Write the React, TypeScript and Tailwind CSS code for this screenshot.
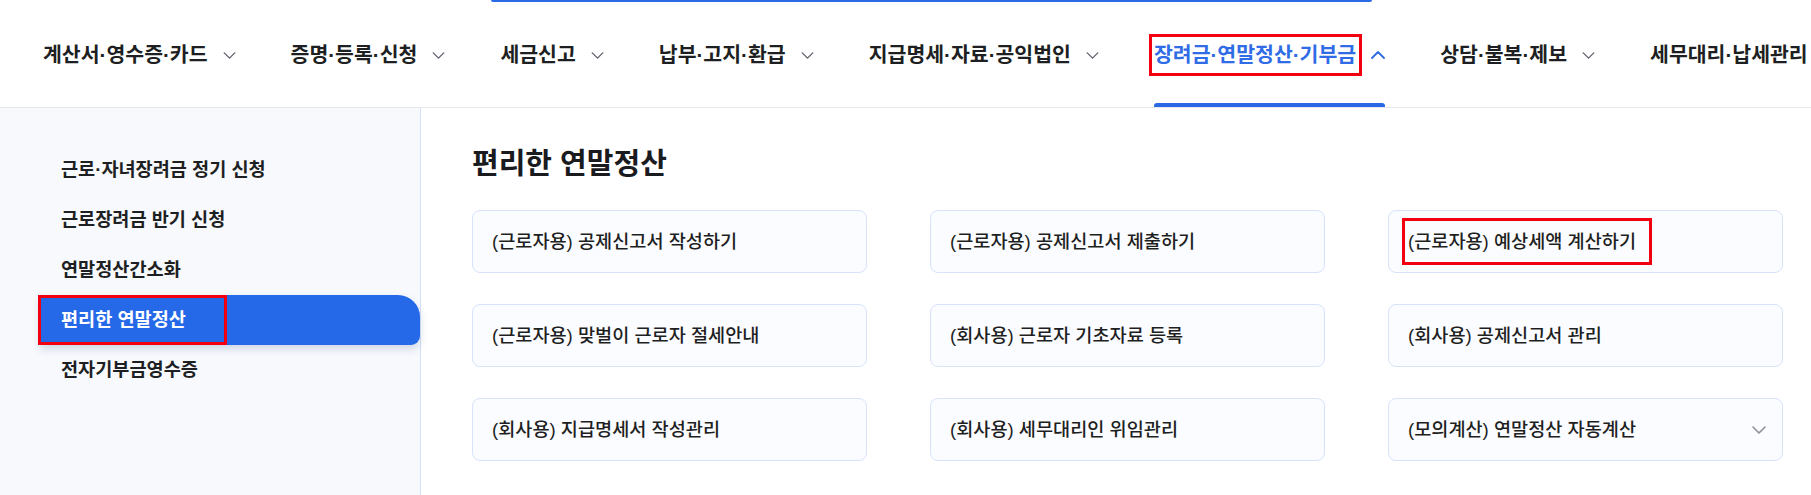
import React from "react";

const navItems = [
  "계산서·영수증·카드",
  "증명·등록·신청",
  "세금신고",
  "납부·고지·환급",
  "지급명세·자료·공익법인",
  "장려금·연말정산·기부금",
  "상담·불복·제보",
  "세무대리·납세관리",
];

const sideItems = [
  "근로·자녀장려금 정기 신청",
  "근로장려금 반기 신청",
  "연말정산간소화",
  "편리한 연말정산",
  "전자기부금영수증",
];

const cards = [
  "(근로자용) 공제신고서 작성하기",
  "(근로자용) 공제신고서 제출하기",
  "(근로자용) 예상세액 계산하기",
  "(근로자용) 맞벌이 근로자 절세안내",
  "(회사용) 근로자 기초자료 등록",
  "(회사용) 공제신고서 관리",
  "(회사용) 지급명세서 작성관리",
  "(회사용) 세무대리인 위임관리",
  "(모의계산) 연말정산 자동계산",
];

function ChevronDown({ className }: { className?: string }) {
  return (
    <svg viewBox="0 0 14 8" className={className} fill="none">
      <path d="M1 1l6 6 6-6" stroke="currentColor" strokeWidth="1.6" strokeLinecap="round" strokeLinejoin="round" />
    </svg>
  );
}

function ChevronUp({ className }: { className?: string }) {
  return (
    <svg viewBox="0 0 14 8" className={className} fill="none">
      <path d="M1 7l6-6 6 6" stroke="currentColor" strokeWidth="1.8" strokeLinecap="round" strokeLinejoin="round" />
    </svg>
  );
}

export default function App() {
  return (
    <div className="w-[1811px] h-[495px] overflow-hidden bg-white font-['Liberation_Sans','Noto_Sans_CJK_KR',sans-serif] text-[#1e1f22]">
      {/* search box bottom edge */}
      <div className="h-[2px] flex">
        <div className="ml-[491px] w-[881px] h-[2px] bg-[#2b6ae6] rounded-b-full" />
      </div>

      {/* top nav */}
      <nav className="h-[106px] border-b border-[#e6e8ec] flex items-stretch pl-[43px] gap-[55px] whitespace-nowrap">
        {navItems.map((item, i) => {
          const active = i === 5;
          const last = i === navItems.length - 1;
          return (
            <div key={item} className="relative flex items-center gap-[15px] pt-[1px]">
              <span
                className={`relative text-[20.5px] leading-[26px] font-semibold ${active ? "text-[#2f6ce5]" : "text-[#1e1f22]"}`}
              >
                {item}
                {active && (
                  <span className="absolute -left-[5px] -right-[6px] -top-[8px] -bottom-[8px] border-[3px] border-[#f2000f]" />
                )}
              </span>
              {!last &&
                (active ? (
                  <ChevronUp className="w-[14px] h-[8px] text-[#2f6ce5]" />
                ) : (
                  <ChevronDown className="w-[13px] h-[7px] text-[#5f636d]" />
                ))}
              {active && (
                <span className="absolute left-0 right-0 bottom-0 h-[4px] rounded-t-[3px] bg-[#2a68e6]" />
              )}
            </div>
          );
        })}
      </nav>

      <div className="flex h-[388px]">
        {/* sidebar */}
        <aside className="w-[421px] shrink-0 bg-[#f7f9fd] border-r border-[#d5e1fa] pt-[37px]">
          {sideItems.map((s, i) => {
            const active = i === 3;
            return (
              <div
                key={s}
                className={`relative h-[50px] ml-[40px] pl-[21px] flex items-center text-[18.6px] font-semibold ${
                  active
                    ? "bg-[#2569e8] text-white rounded-tr-[22px] rounded-br-[9px] shadow-[0_4px_8px_rgba(30,60,120,0.18)]"
                    : "text-[#1e1f22]"
                }`}
              >
                <span className="leading-[26px]">{s}</span>
                {active && (
                  <span className="absolute -left-[2px] top-0 w-[189px] h-[50px] border-[3px] border-[#f2000f]" />
                )}
              </div>
            );
          })}
        </aside>

        {/* main */}
        <main className="flex-1 pl-[51px] pt-[37px]">
          <h2 className="text-[29px] leading-[38px] font-bold text-[#1a1b1e]">편리한 연말정산</h2>
          <div className="mt-[27px] grid grid-cols-[395px_395px_395px] gap-x-[63px] gap-y-[31px]">
            {cards.map((c, i) => (
              <div
                key={c}
                className="h-[63px] rounded-[8px] border border-[#d7e3fb] bg-[#fbfcff] flex items-center justify-between pl-[19px] pr-[16px]"
              >
                <span className="relative text-[18.6px] leading-[24px] font-medium text-[#1e1f22]">
                  {c}
                  {i === 2 && (
                    <span className="absolute -left-[6px] -right-[16px] -top-[12px] -bottom-[11px] border-[3px] border-[#f2000f]" />
                  )}
                </span>
                {i === 8 && <ChevronDown className="w-[14px] h-[8px] text-[#8b909b]" />}
              </div>
            ))}
          </div>
        </main>
      </div>
    </div>
  );
}
